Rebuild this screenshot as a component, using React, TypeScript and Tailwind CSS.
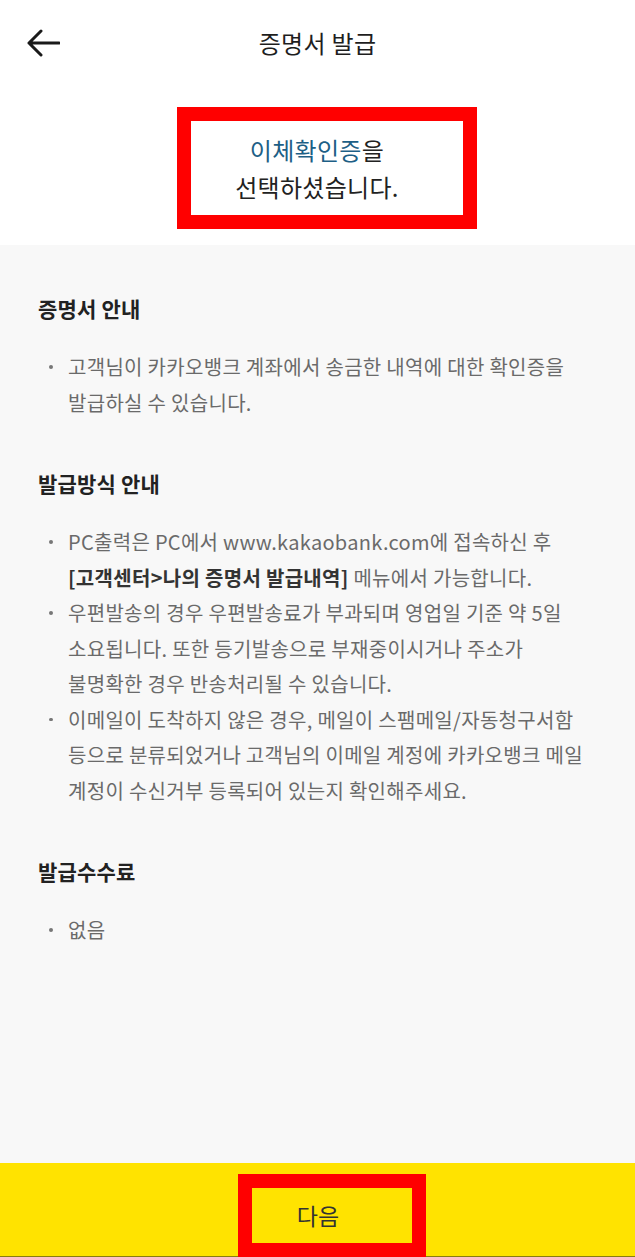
import React from "react";

const font = {
  fontFamily: '"Noto Sans CJK KR", "Noto Sans", sans-serif',
};

function Bullet({ lines }: { lines: React.ReactNode[] }) {
  return (
    <div className="flex">
      <div className="w-[30px] shrink-0 flex justify-start pl-[11px] pt-[16px]">
        <span className="block w-[3.5px] h-[3.5px] rounded-full bg-[#777]" />
      </div>
      <div className="flex flex-col">
        {lines.map((l, i) => (
          <div key={i} className="whitespace-nowrap leading-[35.5px]">
            {l}
          </div>
        ))}
      </div>
    </div>
  );
}

function Section({
  title,
  children,
}: {
  title: string;
  children: React.ReactNode;
}) {
  return (
    <section>
      <h2 className="text-[21px] font-bold leading-[30px] text-[#222] tracking-[0.2px]">
        {title}
      </h2>
      <div className="mt-[26px] text-[20px] text-[#6a6a6a] tracking-[0.3px]">
        {children}
      </div>
    </section>
  );
}

export default function App() {
  return (
    <div className="w-[635px] h-[1257px] flex flex-col bg-white" style={font}>
      {/* top bar */}
      <header className="relative h-[86px] flex items-center justify-center">
        <button className="absolute left-[26px] top-[29px]" aria-label="back">
          <svg width="34" height="28" viewBox="0 0 34 28" fill="none">
            <path
              d="M3 14 H33 M15 2 L3 14 L15 26"
              stroke="#1a1a1a"
              strokeWidth="3"
              strokeLinecap="round"
              strokeLinejoin="round"
            />
          </svg>
        </button>
        <h1 className="text-[24px] text-[#1e1e1e] tracking-[0.3px]">증명서 발급</h1>
      </header>

      {/* selected certificate */}
      <div className="flex mt-[21px] mb-[16px] pl-[177px]">
        <div className="w-[300px] h-[122px] border-[14px] border-[#ff0000] pr-[20px] flex flex-col items-center justify-center text-[24px] leading-[37px] text-[#222] tracking-[0.3px]">
          <p>
            <span className="text-[#1d5f86]">이체확인증</span>을
          </p>
          <p>선택하셨습니다.</p>
        </div>
      </div>

      {/* guide */}
      <main className="flex-1 bg-[#f8f8f8] pl-[38px] pt-[48px] flex flex-col gap-[48px]">
        <Section title="증명서 안내">
          <Bullet
            lines={[
              "고객님이 카카오뱅크 계좌에서 송금한 내역에 대한 확인증을",
              "발급하실 수 있습니다.",
            ]}
          />
        </Section>

        <Section title="발급방식 안내">
          <Bullet
            lines={[
              "PC출력은 PC에서 www.kakaobank.com에 접속하신 후",
              <>
                <b className="font-bold text-[#333]">[고객센터&gt;나의 증명서 발급내역]</b> 메뉴에서 가능합니다.
              </>,
            ]}
          />
          <Bullet
            lines={[
              "우편발송의 경우 우편발송료가 부과되며 영업일 기준 약 5일",
              "소요됩니다. 또한 등기발송으로 부재중이시거나 주소가",
              "불명확한 경우 반송처리될 수 있습니다.",
            ]}
          />
          <Bullet
            lines={[
              "이메일이 도착하지 않은 경우, 메일이 스팸메일/자동청구서함",
              "등으로 분류되었거나 고객님의 이메일 계정에 카카오뱅크 메일",
              "계정이 수신거부 등록되어 있는지 확인해주세요.",
            ]}
          />
        </Section>

        <Section title="발급수수료">
          <Bullet lines={["없음"]} />
        </Section>
      </main>

      {/* bottom action */}
      <footer className="h-[94px] bg-[#ffe300] border-b border-[#8a7d10] flex pl-[238px] pt-[11px]">
        <button className="w-[188px] h-[83px] -mb-px border-[14px] border-[#ff0000] pr-[28px] flex items-center justify-center text-[23px] text-[#333]">
          다음
        </button>
      </footer>
    </div>
  );
}
